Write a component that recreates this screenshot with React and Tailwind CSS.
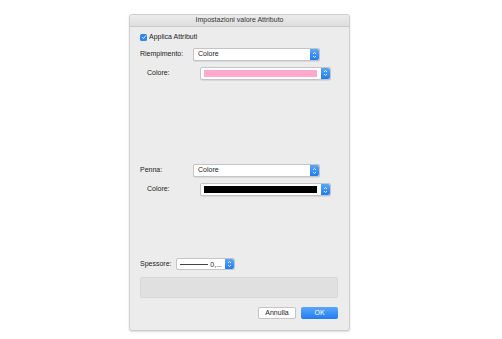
import React from "react";

function Stepper({ w = "w-[9px]" }) {
  return (
    <div className={`${w} h-full bg-gradient-to-b from-[#5aa6f8] to-[#1d7cf2] rounded-r-[2px] flex items-center justify-center`}>
      <svg width="5" height="8" viewBox="0 0 5 8">
        <path d="M1 3 L2.5 1.5 L4 3" stroke="white" strokeWidth="0.8" fill="none" />
        <path d="M1 5 L2.5 6.5 L4 5" stroke="white" strokeWidth="0.8" fill="none" />
      </svg>
    </div>
  );
}

function Popup({ children, className = "" }) {
  return (
    <div className={`flex h-[13px] bg-white border border-[#c4c4c4] rounded-[2px] shadow-[0_0.5px_0.5px_rgba(0,0,0,0.15)] ${className}`}>
      <div className="flex-1 flex items-center px-[4px] text-[7px] text-[#222]">{children}</div>
      <Stepper />
    </div>
  );
}

function ColorPopup({ color }) {
  return (
    <div className="flex h-[13px] w-[131px] bg-white border border-[#c4c4c4] rounded-[2px] shadow-[0_0.5px_0.5px_rgba(0,0,0,0.15)]">
      <div className="flex-1 flex items-center pl-[3px] pr-[4px]">
        <div className={`h-[7px] w-full ${color}`} />
      </div>
      <Stepper />
    </div>
  );
}

export default function App() {
  return (
    <div className="w-[502px] h-[339px] bg-white pt-[14px] pl-[129px]" style={{ fontFamily: '"Liberation Sans", Arial, sans-serif' }}>
      <div className="w-[221px] h-[317px] bg-[#ececec] border border-[#cfcfcf] rounded-[3px] shadow-[0_1px_2px_rgba(0,0,0,0.15)] flex flex-col">
        <div className="h-[12px] border-b border-[#c9c9c9] bg-gradient-to-b from-[#ececec] to-[#dedede] rounded-t-[3px] flex items-center justify-center text-[7px] text-[#333]">
          Impostazioni valore Attributo
        </div>
        <div className="flex flex-col px-[10px] flex-1">
          <div className="flex items-center gap-[2px] mt-[6px] h-[8px]">
            <div className="w-[7px] h-[7px] rounded-[1.5px] bg-[#2f86f5] flex items-center justify-center">
              <svg width="6" height="6" viewBox="0 0 6 6">
                <path d="M1.2 3.2 L2.5 4.5 L4.8 1.5" stroke="white" strokeWidth="0.9" fill="none" />
              </svg>
            </div>
            <span className="text-[7px] text-[#222]">Applica Attributi</span>
          </div>
          <div className="flex items-center mt-[7px] h-[13px]">
            <span className="w-[53px] text-[7px] text-[#222]">Riempimento:</span>
            <Popup className="w-[127px]">Colore</Popup>
          </div>
          <div className="flex items-center mt-[6px] h-[12px]">
            <span className="w-[60px] pl-[7px] text-[7px] text-[#222]">Colore:</span>
            <ColorPopup color="bg-[#ffaacc]" />
          </div>
          <div className="flex items-center mt-[85px] h-[13px]">
            <span className="w-[53px] text-[7px] text-[#222]">Penna:</span>
            <Popup className="w-[127px]">Colore</Popup>
          </div>
          <div className="flex items-center mt-[6px] h-[13px]">
            <span className="w-[60px] pl-[7px] text-[7px] text-[#222]">Colore:</span>
            <ColorPopup color="bg-black" />
          </div>
          <div className="flex items-center mt-[62px] h-[12px]">
            <span className="w-[36px] text-[7px] text-[#222]">Spessore:</span>
            <div className="flex h-[12px] w-[59px] bg-white border border-[#c4c4c4] rounded-[2px]">
              <div className="flex-1 flex items-center px-[3px] gap-[2px]">
                <div className="h-px flex-1 bg-[#444]" />
                <span className="text-[7px] text-[#222] leading-none">0,...</span>
              </div>
              <Stepper />
            </div>
          </div>
          <div className="mt-[7px] h-[21px] w-[198px] bg-[#e0e0e0] border border-[#d8d8d8] rounded-[2px]" />
          <div className="flex justify-end gap-[5px] mt-[9px] pr-[1px]">
            <div className="w-[38px] h-[12px] bg-white border border-[#c4c4c4] rounded-[2px] flex items-center justify-center text-[7px] text-[#222]">Annulla</div>
            <div className="w-[37px] h-[12px] bg-gradient-to-b from-[#5aa6f8] to-[#1d7cf2] rounded-[2px] flex items-center justify-center text-[7px] text-white">OK</div>
          </div>
        </div>
      </div>
    </div>
  );
}
